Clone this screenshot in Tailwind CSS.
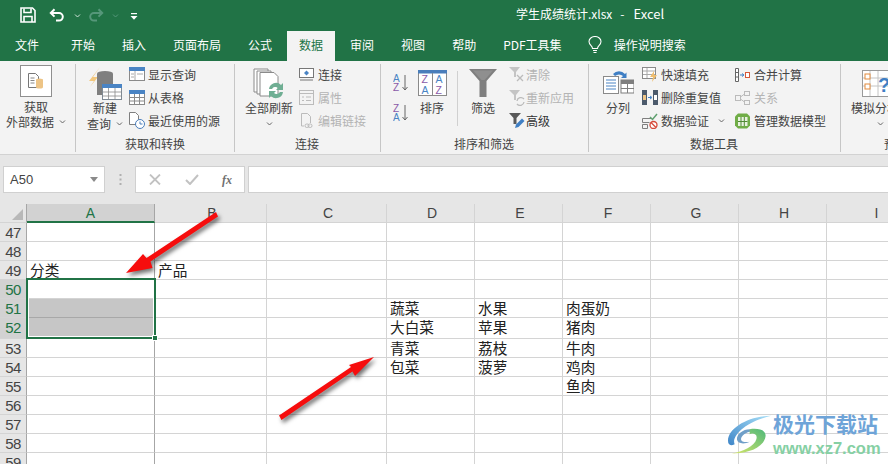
<!DOCTYPE html>
<html lang="zh-CN">
<head>
    <meta charset="UTF-8">
    <meta name="viewport" content="width=device-width, initial-scale=1.0">
    <title>学生成绩统计.xlsx - Excel</title>
    <script src="https://cdn.jsdelivr.net/npm/@tailwindcss/browser@4"></script>
</head>
<body class="bg-white">
<div class="relative w-[888px] h-[464px] overflow-hidden font-['Noto_Sans_CJK_SC','Noto_Sans',sans-serif] text-[12px] text-[#444]">

    <!-- Title bar -->
    <div class="relative h-[31px] bg-[#217346] flex items-center text-white">
        <svg class="ml-[20px] mt-[-2px]" width="16" height="16" viewBox="0 0 16 16" fill="none" stroke="#fff" stroke-width="1.6"><path d="M1 1h11.5L15 3.5V15H1z"/><path d="M4 1.500v4h7v-4M4 15V9.500h8V15"/></svg>
        <svg class="ml-[13px] mt-[-2px]" width="15" height="14" viewBox="0 0 15 14" fill="none" stroke="#fff" stroke-width="2"><path d="M2 5h8a3.700 3.700 0 0 1 0 7.600H7"/><path d="M5.500 1.200 1.800 5l3.700 3.600"/></svg>
        <svg class="ml-[10px]" width="7" height="4" viewBox="0 0 7 4" fill="none" stroke="#cfe3d8"><path d="M1 .5l2.500 2.500L6 .5"/></svg>
        <svg class="ml-[8px] mt-[-2px]" width="15" height="14" viewBox="0 0 15 14" fill="none" stroke="#56977a" stroke-width="2"><path d="M13 5H5a3.700 3.700 0 0 0 0 7.600h3"/><path d="M9.500 1.200 13.200 5 9.500 8.600"/></svg>
        <svg class="ml-[8px]" width="7" height="4" viewBox="0 0 7 4" fill="none" stroke="#56977a"><path d="M1 .5l2.500 2.500L6 .5"/></svg>
        <svg class="ml-[11px] mt-[1px]" width="8" height="7" viewBox="0 0 8 7" fill="#fff"><rect x="1" y="0" width="6" height="1.200"/><path d="M0.500 3h7L4 6.800z"/></svg>
        <div class="absolute left-[516px] top-[5px] leading-[18px] flex items-baseline">
            <span>学生成绩统计.xlsx</span><span class="ml-[8px]">-</span><span class="ml-[9px] text-[13px]">Excel</span>
        </div>
    </div>

    <!-- Tabs -->
    <div class="h-[30px] bg-[#217346] flex items-end text-white pl-[15px] gap-[27px]">
        <div class="h-[30px] leading-[28px] mr-[5px]">文件</div>
        <div class="h-[30px] leading-[28px]">开始</div>
        <div class="h-[30px] leading-[28px]">插入</div>
        <div class="h-[30px] leading-[28px]">页面布局</div>
        <div class="h-[30px] leading-[28px]">公式</div>
        <div class="h-[30px] leading-[28px] -mx-[12px] px-[12px] bg-[#f3f3f3] text-[#217346]">数据</div>
        <div class="h-[30px] leading-[28px]">审阅</div>
        <div class="h-[30px] leading-[28px]">视图</div>
        <div class="h-[30px] leading-[28px]">帮助</div>
        <div class="h-[30px] leading-[28px]">PDF工具集</div>
        <div class="h-[30px] flex items-center gap-[12px] -ml-[1px] pb-[2px]">
            <svg width="14" height="18" viewBox="0 0 14 18" fill="none" stroke="#fff" stroke-width="1.100"><path d="M4.500 12.500C4.500 9.500 1 9 1 5.500a6 5 0 0 1 12 0c0 3.500-3.500 4-3.500 7z"/><path d="M5 14.500h4M5.500 16.500h3"/></svg>
            <span>操作说明搜索</span>
        </div>
    </div>

    <!-- Ribbon -->
    <div class="h-[94px] bg-[#f3f3f3] border-b border-[#d2d2d2] flex pt-[3px]">

        <!-- 获取外部数据 -->
        <div class="w-[76px] h-[88px] border-r border-[#c6c6c6] pl-[6px]">
            <div class="w-[60px] flex flex-col items-center leading-[15px]">
                <div class="h-[35px] pt-[1px]">
                    <div class="w-[32px] h-[32px] bg-white border border-[#8f8f8f] flex items-center justify-center">
                        <svg width="18" height="18" viewBox="0 0 18 18"><path d="M1.500 1.500h7l3 3v11h-10z" fill="#fff" stroke="#777"/><path d="M3.500 6h4M3.500 8.500h4M3.500 11h4" stroke="#888"/><path d="M9 8a3.500 1.500 0 0 1 7 0v7a3.500 1.500 0 0 1-7 0z" fill="#edc486"/></svg>
                    </div>
                </div>
                <div>获取</div>
                <div class="flex items-center self-start gap-[5px]">外部数据
                    <svg width="7" height="4" viewBox="0 0 7 4" fill="none" stroke="#666"><path d="M1 .5l2.500 2.500L6 .5"/></svg>
                </div>
            </div>
        </div>

        <!-- 获取和转换 -->
        <div class="w-[159px] h-[88px] border-r border-[#c6c6c6] flex flex-col">
            <div class="h-[72px] flex pl-[10px]">
                <div class="w-[38px] flex flex-col items-center leading-[16px]">
                    <div class="h-[36px] pt-[3px]">
                        <svg width="34" height="33" viewBox="0 0 34 33"><path d="M12 0 1 14h5L2 20 10 10H5z" fill="#f2c77d"/><path d="M9 6.500a8 2.500 0 0 1 16 0V28H9z" fill="#7f7f7f"/><rect x="14.500" y="17.500" width="19" height="15" fill="#fff" stroke="#7f8a94"/><rect x="14" y="17" width="20" height="4" fill="#4a84c4"/><path d="M14.500 25h19M14.500 29h19M20.500 21v11M27 21v11" stroke="#8a8a8a" stroke-width=".8"/></svg>
                    </div>
                    <div>新建</div>
                    <div class="flex items-center gap-[5px]">查询
                        <svg width="7" height="4" viewBox="0 0 7 4" fill="none" stroke="#666"><path d="M1 .5l2.500 2.500L6 .5"/></svg>
                    </div>
                </div>
                <div class="ml-[5px] -mt-[1px] flex flex-col">
                    <div class="h-[23px] flex items-center gap-[3px]">
                        <svg width="16" height="15" viewBox="0 0 16 15"><rect x=".5" y=".5" width="15" height="13" fill="#fff" stroke="#8a8a8a"/><rect width="16" height="4" fill="#4a84c4"/><path d="M6 4v9M2 7h3M2 10h3M8 7h6" stroke="#aaa"/></svg>
                        <span>显示查询</span>
                    </div>
                    <div class="h-[23px] flex items-center gap-[3px]">
                        <svg width="16" height="15" viewBox="0 0 16 15"><rect x=".5" y=".5" width="15" height="14" fill="#fff" stroke="#8a8a8a"/><rect width="16" height="4" fill="#4a84c4"/><path d="M1 7.500h14M1 11h14M5.500 4v10M10.500 4v10" stroke="#8a8a8a"/></svg>
                        <span>从表格</span>
                    </div>
                    <div class="h-[23px] flex items-center gap-[3px]">
                        <svg width="16" height="17" viewBox="0 0 16 17"><path d="M.5.500h6l3 3v9H.5z" fill="#fff" stroke="#7f7f7f"/><circle cx="11" cy="12" r="4.500" fill="#fff" stroke="#4a7ebb"/><path d="M11 9.500V12h2.500" fill="none" stroke="#4a7ebb"/></svg>
                        <span>最近使用的源</span>
                    </div>
                </div>
            </div>
            <div class="h-[16px] leading-[16px] text-center">获取和转换</div>
        </div>

        <!-- 连接 -->
        <div class="w-[146px] h-[88px] border-r border-[#c6c6c6] flex flex-col">
            <div class="h-[72px] flex pl-[10px]">
                <div class="w-[48px] flex flex-col items-center leading-[16px]">
                    <div class="h-[36px] pt-[4px]">
                        <svg width="32" height="32" viewBox="0 0 32 32"><path d="M1 1h14v23H1z" fill="#fff" stroke="#8a8a8a"/><path d="M4 3h14v23H4z" fill="#fff" stroke="#8a8a8a"/><path d="M7 4.500h14l4 4V28H7z" fill="#fff" stroke="#8a8a8a"/><path d="M16 21a7 7 0 0 1 12-4l2-2v7h-7l2-2a4 4 0 0 0-6 1z" fill="#6fae93"/><path d="M30 24a7 7 0 0 1-12 4l-2 2v-7h7l-2 2a4 4 0 0 0 6-1z" fill="#6fae93"/></svg>
                    </div>
                    <div>全部刷新</div>
                    <div class="h-[16px] flex items-center">
                        <svg width="7" height="4" viewBox="0 0 7 4" fill="none" stroke="#666"><path d="M1 .5l2.500 2.500L6 .5"/></svg>
                    </div>
                </div>
                <div class="ml-[6px] -mt-[1px] flex flex-col">
                    <div class="h-[23px] flex items-center gap-[4px]">
                        <svg width="15" height="14" viewBox="0 0 15 14"><rect x=".5" y=".5" width="14" height="9" fill="#fff" stroke="#777"/><path d="M7.500 2.500 10 5 7.500 7.500 5 5z" fill="#4a84c4"/><path d="M1 12h13" stroke="#777"/></svg>
                        <span>连接</span>
                    </div>
                    <div class="h-[23px] flex items-center gap-[4px] text-[#b4b4b4]">
                        <svg width="15" height="15" viewBox="0 0 15 15" fill="none" stroke="#bbb"><rect x=".5" y=".5" width="14" height="14"/><path d="M.5 3.500h14M3 7h2M7 7h5M3 10.500h2M7 10.500h5"/></svg>
                        <span>属性</span>
                    </div>
                    <div class="h-[23px] flex items-center gap-[4px] text-[#b4b4b4]">
                        <svg width="15" height="16" viewBox="0 0 15 16" fill="none" stroke="#bbb"><path d="M2.500.500h6l3 3V10M2.500.500V13H5"/><rect x="6" y="11" width="4" height="3.500" rx="1.700"/><rect x="9" y="11" width="4" height="3.500" rx="1.700"/></svg>
                        <span>编辑链接</span>
                    </div>
                </div>
            </div>
            <div class="h-[16px] leading-[16px] pl-[60px]">连接</div>
        </div>

        <!-- 排序和筛选 -->
        <div class="w-[208px] h-[88px] border-r border-[#c6c6c6] flex flex-col">
            <div class="h-[72px] flex">
                <div class="ml-[12px] w-[16px] pt-[9px] flex flex-col gap-[11px]">
                    <svg width="16" height="19" viewBox="0 0 16 19"><text x="0" y="9" font-family="Liberation Sans" font-size="10" fill="#4a84c4">A</text><text x="0" y="18" font-family="Liberation Sans" font-size="10" fill="#8a5aa8">Z</text><path d="M12 2v15M9.500 14l2.500 3 2.500-3" fill="none" stroke="#666"/></svg>
                    <svg width="16" height="19" viewBox="0 0 16 19"><text x="0" y="9" font-family="Liberation Sans" font-size="10" fill="#8a5aa8">Z</text><text x="0" y="18" font-family="Liberation Sans" font-size="10" fill="#4a84c4">A</text><path d="M12 2v15M9.500 14l2.500 3 2.500-3" fill="none" stroke="#666"/></svg>
                </div>
                <div class="ml-[8px] w-[30px] flex flex-col items-center leading-[16px]">
                    <div class="h-[36px] pt-[6px]">
                        <svg width="29" height="26" viewBox="0 0 29 26"><rect x=".5" y=".5" width="28" height="25" fill="#fff" stroke="#8a8a8a"/><rect width="29" height="3.500" fill="#4a7ebb"/><path d="M14.500 3v22" stroke="#8a8a8a"/><text x="3.500" y="13" font-family="Liberation Sans" font-size="10.500" fill="#8a5aa8">Z</text><text x="3.500" y="23.500" font-family="Liberation Sans" font-size="10.500" fill="#4a84c4">A</text><text x="17.500" y="13" font-family="Liberation Sans" font-size="10.500" fill="#4a84c4">A</text><text x="17.500" y="23.500" font-family="Liberation Sans" font-size="10.500" fill="#8a5aa8">Z</text></svg>
                    </div>
                    <div>排序</div>
                </div>
                <div class="ml-[10px] mt-[7px] w-px h-[55px] bg-[#d0d0d0]"></div>
                <div class="ml-[10px] w-[30px] flex flex-col items-center leading-[16px]">
                    <div class="h-[36px] pt-[5px]">
                        <svg width="28" height="28" viewBox="0 0 28 28"><path d="M0 0h28L17.500 12v16h-7V12z" fill="#7f7f7f"/><path d="M4 1.500h20L15.500 11h-3z" fill="#8f8f8f"/></svg>
                    </div>
                    <div>筛选</div>
                </div>
                <div class="ml-[11px] -mt-[1px] flex flex-col">
                    <div class="h-[23px] flex items-center gap-[1px] text-[#b4b4b4]">
                        <svg width="16" height="15" viewBox="0 0 16 15"><path d="M0 0h11L7 5v5H5V5z" fill="#c4c4c4"/><path d="M8 8l6 6M14 8l-6 6" stroke="#bbb" stroke-width="1.300"/></svg>
                        <span>清除</span>
                    </div>
                    <div class="h-[23px] flex items-center gap-[1px] text-[#b4b4b4]">
                        <svg width="16" height="16" viewBox="0 0 16 16"><path d="M0 0h11L7 5v5H5V5z" fill="#c4c4c4"/><path d="M8 11a4 4 0 0 1 7-2M15 12a4 4 0 0 1-7 2" fill="none" stroke="#bbb" stroke-width="1.300"/></svg>
                        <span>重新应用</span>
                    </div>
                    <div class="h-[23px] flex items-center gap-[1px]">
                        <svg width="16" height="16" viewBox="0 0 16 16"><path d="M0 0h12L7.500 5v6h-3V5z" fill="#595959"/><path d="M6 15l1-3.500 6-6 2.500 2.500-6 6z" fill="#3f7fc4"/></svg>
                        <span class="text-[#333]">高级</span>
                    </div>
                </div>
            </div>
            <div class="h-[16px] leading-[16px] pl-[73px]">排序和筛选</div>
        </div>

        <!-- 数据工具 -->
        <div class="w-[252px] h-[88px] border-r border-[#c6c6c6] flex flex-col">
            <div class="h-[72px] flex">
                <div class="ml-[13px] w-[32px] flex flex-col items-center leading-[16px]">
                    <div class="h-[36px] pt-[4px]">
                        <svg width="31" height="28" viewBox="0 0 31 28"><path d="M10 6a8 8 0 0 1 12 0l1.500-1.500V10h-5.500l2-2a6 6 0 0 0-8 0z" fill="#3f7fc4"/><rect x=".5" y="8.500" width="15" height="17" fill="#fff" stroke="#8a8a8a"/><path d="M3 12h10M3 15h10M3 18h10M3 21h10" stroke="#4a84c4"/><rect x="18" y="12" width="13" height="13" fill="#fff" stroke="#7f7f7f"/><rect x="18" y="12" width="13" height="4" fill="#7f7f7f"/><path d="M24.500 16v9M18 20.500h13" stroke="#7f7f7f"/></svg>
                    </div>
                    <div>分列</div>
                </div>
                <div class="ml-[8px] -mt-[1px] flex flex-col">
                    <div class="h-[23px] flex items-center gap-[3px]">
                        <svg width="16" height="15" viewBox="0 0 16 15"><rect x=".5" y=".5" width="13" height="11" fill="#fff" stroke="#8a8a8a"/><path d="M1 4h12M1 7.500h12M5 1v10" stroke="#aaa"/><path d="M12 4 8 10h3l-1 5 5-7h-3z" fill="#efbe6f"/></svg>
                        <span>快速填充</span>
                    </div>
                    <div class="h-[23px] flex items-center gap-[3px]">
                        <svg width="16" height="15" viewBox="0 0 16 15"><rect x="0" y="0" width="5" height="15" fill="#4c5a6c"/><rect x="1" y="5" width="3" height="5" fill="#edc486"/><rect x="11" y="0" width="5" height="15" fill="#4c5a6c"/><rect x="12" y="5" width="3" height="5" fill="#fff"/><path d="M6 7.500h3M8 6l2 1.500L8 9" fill="none" stroke="#3f7fc4"/></svg>
                        <span>删除重复值</span>
                    </div>
                    <div class="h-[23px] flex items-center gap-[3px]">
                        <svg width="16" height="16" viewBox="0 0 16 16"><path d="M.5 5.500h9M.5 5.500v4h7M.5 11.500h5v4h-5z" fill="none" stroke="#7f7f7f"/><path d="M8 4l2.500 2.500L15 1" fill="none" stroke="#5fa06f" stroke-width="1.500"/><circle cx="11.500" cy="12" r="3.500" fill="#fff" stroke="#d64a3a" stroke-width="1.300"/><path d="M9 9.500l5 5" stroke="#d64a3a" stroke-width="1.300"/></svg>
                        <span class="flex items-center gap-[9px]">数据验证
                            <svg width="7" height="4" viewBox="0 0 7 4" fill="none" stroke="#666"><path d="M1 .5l2.500 2.500L6 .5"/></svg>
                        </span>
                    </div>
                </div>
                <div class="ml-[10px] -mt-[1px] flex flex-col">
                    <div class="h-[23px] flex items-center gap-[4px]">
                        <svg width="15" height="14" viewBox="0 0 15 14"><path d="M.5.500h3v13h-3zM.5 4.500h3M.5 9h3" fill="#fff" stroke="#666"/><path d="M5 7h3M7 5.500 9 7 7 8.500" fill="none" stroke="#3f7fc4"/><rect x="10.500" y="4.500" width="4" height="5" fill="#fff" stroke="#d6583a"/></svg>
                        <span>合并计算</span>
                    </div>
                    <div class="h-[23px] flex items-center gap-[4px] text-[#b4b4b4]">
                        <svg width="15" height="14" viewBox="0 0 15 14" fill="none" stroke="#bbb"><rect x=".5" y="4.500" width="5" height="5"/><rect x="9.500" y=".5" width="5" height="4"/><rect x="9.500" y="9.500" width="5" height="4"/><path d="M5.500 6l4-3M5.500 8l4 3"/></svg>
                        <span>关系</span>
                    </div>
                    <div class="h-[23px] flex items-center gap-[4px]">
                        <svg width="15" height="16" viewBox="0 0 15 16"><path d="M3 .500h9l3 3v9l-3 3H3l-3-3v-9z" fill="#70ad47"/><rect x="3" y="4" width="9.500" height="9" fill="#e8f2df"/><path d="M6 4v9M9.300 4v9M3 8.500h9.500" stroke="#4f8a34"/></svg>
                        <span>管理数据模型</span>
                    </div>
                </div>
            </div>
            <div class="h-[16px] leading-[16px] pl-[101px]">数据工具</div>
        </div>

        <!-- 预测 (cut off at the window edge) -->
        <div class="flex-1 h-[88px] flex flex-col overflow-hidden whitespace-nowrap">
            <div class="h-[72px] pl-[10px] flex flex-col leading-[16px]">
                <div class="h-[36px] pl-[11px] pt-[6px]">
                    <svg width="27" height="27" viewBox="0 0 27 27"><rect x=".5" y=".5" width="26" height="26" fill="#fff" stroke="#9a9a9a"/><path d="M8 1v25M16 1v25M1 8h25M1 16h25" stroke="#c4c4c4"/><rect x="3" y="4" width="5" height="5" fill="#fff" stroke="#e28a3c"/><rect x="3" y="14" width="5" height="5" fill="#fff" stroke="#e28a3c"/><text x="16" y="22" font-family="Liberation Sans" font-weight="700" font-size="20" fill="#3f7fc4">?</text></svg>
                </div>
                <div>模拟分析</div>
                <div class="h-[16px] flex items-center pl-[26px]">
                    <svg width="7" height="4" viewBox="0 0 7 4" fill="none" stroke="#666"><path d="M1 .5l2.500 2.500L6 .5"/></svg>
                </div>
            </div>
            <div class="h-[16px] leading-[16px] pl-[43px]">预测</div>
        </div>
    </div>

    <!-- Formula bar -->
    <div class="h-[49px] bg-[#e6e6e6] flex items-start pt-[11px] pl-[3px] font-['Liberation_Sans',sans-serif]">
        <div class="w-[102px] h-[27px] bg-white border border-[#d0d0d0] flex items-center justify-between pl-[6px] pr-[6px] text-[13px] text-[#444]">
            A50
            <svg width="8" height="5" viewBox="0 0 8 5" fill="#8a8a8a"><path d="M0 0h8L4 5z"/></svg>
        </div>
        <div class="w-[30px] h-[27px] flex items-center justify-center">
            <svg width="3" height="11" viewBox="0 0 3 11" fill="#b0b0b0"><rect x=".5" width="2" height="2"/><rect x=".5" y="4.500" width="2" height="2"/><rect x=".5" y="9" width="2" height="2"/></svg>
        </div>
        <div class="w-[110px] h-[27px] bg-white border border-[#d0d0d0] flex items-center pl-[13px]">
            <svg width="12" height="11" viewBox="0 0 12 11" stroke="#c2c2c2" stroke-width="1.800"><path d="M1 .5l10 10M11 .5l-10 10"/></svg>
            <svg class="ml-[24px]" width="14" height="11" viewBox="0 0 14 11" fill="none" stroke="#c2c2c2" stroke-width="2"><path d="M1 6l4 4 8-9"/></svg>
            <span class="ml-[23px] font-['Liberation_Serif',serif] italic font-bold text-[12px] text-[#707070]">fx</span>
        </div>
        <div class="ml-[3px] flex-1 h-[27px] bg-white border-y border-l border-[#d0d0d0]"></div>
    </div>

    <!-- Sheet grid -->
    <div class="grid grid-cols-[27px_128px_112px_120px_88px_88px_88px_88px_88px_97px] grid-rows-[19px_19px_19px_19px_19px_19px_21px_19px_19px_19px_19px_19px_19px_19px_19px] text-[14.67px] text-[#222] leading-[17px] [&>div]:border-r [&>div]:border-b [&>div]:border-[#d4d4d4] [&>div]:pl-[3px] [&>div]:overflow-hidden [&>div]:whitespace-nowrap [&>div:nth-child(10n+1)]:border-r-[#a6a6a6] [&>div:nth-child(10n+2)]:border-r-[#a6a6a6]">
        <!-- Column headers -->
        <div class="bg-[#e6e6e6] flex items-end justify-end !pl-0 pr-[3px] pb-[2px]"><svg width="11" height="11" viewBox="0 0 11 11" fill="#b8b8b8"><path d="M11 0v11H0z"/></svg></div>
        <div class="bg-[#d2d2d2] text-center text-[#217346] !pl-0 !border-b-2 !border-b-[#217346] font-['Liberation_Sans',sans-serif] text-[14px] leading-[19px]">A</div>
        <div class="bg-[#e6e6e6] text-center text-[#444] font-['Liberation_Sans',sans-serif] text-[14px] leading-[19px]">B</div>
        <div class="bg-[#e6e6e6] text-center text-[#444] font-['Liberation_Sans',sans-serif] text-[14px] leading-[19px]">C</div>
        <div class="bg-[#e6e6e6] text-center text-[#444] font-['Liberation_Sans',sans-serif] text-[14px] leading-[19px]">D</div>
        <div class="bg-[#e6e6e6] text-center text-[#444] font-['Liberation_Sans',sans-serif] text-[14px] leading-[19px]">E</div>
        <div class="bg-[#e6e6e6] text-center text-[#444] font-['Liberation_Sans',sans-serif] text-[14px] leading-[19px]">F</div>
        <div class="bg-[#e6e6e6] text-center text-[#444] font-['Liberation_Sans',sans-serif] text-[14px] leading-[19px]">G</div>
        <div class="bg-[#e6e6e6] text-center text-[#444] font-['Liberation_Sans',sans-serif] text-[14px] leading-[19px]">H</div>
        <div class="bg-[#e6e6e6] text-center text-[#444] font-['Liberation_Sans',sans-serif] text-[14px] leading-[19px]">I</div>
        <!-- 47 -->
        <div class="bg-[#e6e6e6] !pl-0 text-center text-[#444] font-['Liberation_Sans',sans-serif] text-[15px] tracking-[-0.5px] leading-[20px]">47</div><div></div><div></div><div></div><div></div><div></div><div></div><div></div><div></div><div></div>
        <!-- 48 -->
        <div class="bg-[#e6e6e6] !pl-0 text-center text-[#444] font-['Liberation_Sans',sans-serif] text-[15px] tracking-[-0.5px] leading-[20px]">48</div><div></div><div></div><div></div><div></div><div></div><div></div><div></div><div></div><div></div>
        <!-- 49 -->
        <div class="bg-[#e6e6e6] !pl-0 text-center text-[#444] font-['Liberation_Sans',sans-serif] text-[15px] tracking-[-0.5px] leading-[20px]">49</div><div>分类</div><div>产品</div><div></div><div></div><div></div><div></div><div></div><div></div><div></div>
        <!-- 50 -->
        <div class="bg-[#d2d2d2] !pl-0 text-center text-[#217346] font-['Liberation_Sans',sans-serif] text-[15px] tracking-[-0.5px] leading-[20px]">50</div><div></div><div></div><div></div><div></div><div></div><div></div><div></div><div></div><div></div>
        <!-- 51 -->
        <div class="bg-[#d2d2d2] !pl-0 text-center text-[#217346] font-['Liberation_Sans',sans-serif] text-[15px] tracking-[-0.5px] leading-[20px]">51</div><div class="bg-[#c6c6c6] !border-b-[#a8a8a8]"></div><div></div><div></div><div>蔬菜</div><div>水果</div><div>肉蛋奶</div><div></div><div></div><div></div>
        <!-- 52 -->
        <div class="bg-[#d2d2d2] !pl-0 text-center text-[#217346] font-['Liberation_Sans',sans-serif] text-[15px] tracking-[-0.5px] leading-[20px]">52</div><div class="bg-[#c6c6c6]"></div><div></div><div></div><div>大白菜</div><div>苹果</div><div>猪肉</div><div></div><div></div><div></div>
        <!-- 53 -->
        <div class="bg-[#e6e6e6] !pl-0 text-center text-[#444] font-['Liberation_Sans',sans-serif] text-[15px] tracking-[-0.5px] leading-[20px]">53</div><div></div><div></div><div></div><div>青菜</div><div>荔枝</div><div>牛肉</div><div></div><div></div><div></div>
        <!-- 54 -->
        <div class="bg-[#e6e6e6] !pl-0 text-center text-[#444] font-['Liberation_Sans',sans-serif] text-[15px] tracking-[-0.5px] leading-[20px]">54</div><div></div><div></div><div></div><div>包菜</div><div>菠萝</div><div>鸡肉</div><div></div><div></div><div></div>
        <!-- 55 -->
        <div class="bg-[#e6e6e6] !pl-0 text-center text-[#444] font-['Liberation_Sans',sans-serif] text-[15px] tracking-[-0.5px] leading-[20px]">55</div><div></div><div></div><div></div><div></div><div></div><div>鱼肉</div><div></div><div></div><div></div>
        <!-- 56 -->
        <div class="bg-[#e6e6e6] !pl-0 text-center text-[#444] font-['Liberation_Sans',sans-serif] text-[15px] tracking-[-0.5px] leading-[20px]">56</div><div></div><div></div><div></div><div></div><div></div><div></div><div></div><div></div><div></div>
        <!-- 57 -->
        <div class="bg-[#e6e6e6] !pl-0 text-center text-[#444] font-['Liberation_Sans',sans-serif] text-[15px] tracking-[-0.5px] leading-[20px]">57</div><div></div><div></div><div></div><div></div><div></div><div></div><div></div><div></div><div></div>
        <!-- 58 -->
        <div class="bg-[#e6e6e6] !pl-0 text-center text-[#444] font-['Liberation_Sans',sans-serif] text-[15px] tracking-[-0.5px] leading-[20px]">58</div><div></div><div></div><div></div><div></div><div></div><div></div><div></div><div></div><div></div>
        <!-- 59 -->
        <div class="bg-[#e6e6e6] !pl-0 text-center text-[#444] font-['Liberation_Sans',sans-serif] text-[15px] tracking-[-0.5px] leading-[20px]">59</div><div></div><div></div><div></div><div></div><div></div><div></div><div></div><div></div><div></div>
    </div>

    <!-- Selection box -->
    <div class="absolute left-[26px] top-[278px] w-[130px] h-[61px] border-2 border-[#217346] shadow-[inset_0_0_0_1px_#fff]">
        <div class="absolute right-[-4px] bottom-[-4px] w-[6px] h-[6px] bg-[#217346] border border-white"></div>
    </div>

    <!-- Red arrows drawn over the sheet -->
    <svg class="absolute left-0 top-0 drop-shadow-[2px_3px_2px_rgba(0,0,0,0.55)]" width="888" height="464" viewBox="0 0 888 464" fill="#f60d0d">
        <path d="M216 212 218 216.500 150.500 261.500 152.500 268 126 273 143 254 146.500 258z"/>
        <path d="M279 415.500 281.500 420 352.500 371.500 355 376 374 357 349 365 351 367z"/>
    </svg>

    <!-- Watermark -->
    <div class="absolute left-[728px] top-[414px] flex items-start">
        <svg width="45" height="42" viewBox="85 100 135 125">
            <defs>
                <linearGradient id="swirlBlue" x1="0" y1="1" x2="1" y2="0"><stop offset="0" stop-color="#3f86c8"/><stop offset="1" stop-color="#a8e0f8"/></linearGradient>
                <linearGradient id="swirlGreen" x1="1" y1="0" x2="0" y2="1"><stop offset="0" stop-color="#4fb87a"/><stop offset="1" stop-color="#d8e868"/></linearGradient>
            </defs>
            <path d="M215 105C150 105 85 140 85 180c0 15 10 15 20 10-10-20 25-65 110-85z" fill="url(#swirlBlue)"/>
            <path d="M150 145c-20 0-40 15-38 32 2 12 22 14 38 6-14 2-26 0-26-8 0-10 14-22 34-24z" fill="#6f9fc8"/>
            <path d="M150 145c40-5 60 10 40 40-20 25-60 33-95 33 35-6 70-23 75-43 5-15-10-20-20-15z" fill="url(#swirlGreen)"/>
        </svg>
        <div class="flex flex-col">
            <div class="text-[21px] leading-[24px] font-bold text-[#6ea4d8] mt-[-3px]">极光下载站</div>
            <div class="text-[16.500px] leading-[18px] font-['Liberation_Sans',sans-serif] font-bold text-[#86d0a4] mt-[4px]">www.xz7.com</div>
        </div>
    </div>
</div>
</body>
</html>
